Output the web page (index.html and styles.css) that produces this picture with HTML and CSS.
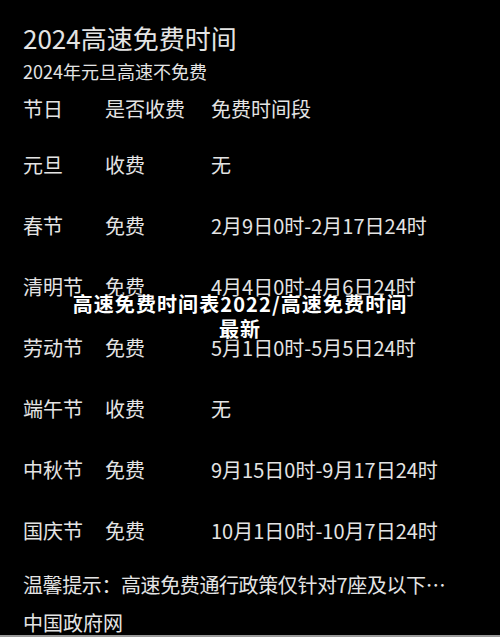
FILE: index.html
```html
<!DOCTYPE html>
<html lang="zh-CN">
<head>
<meta charset="utf-8">
<link rel="stylesheet" href="styles.css">
</head>
<body>
<div class="page">
  <div class="title">2024高速免费时间</div>
  <div class="subtitle">2024年元旦高速不免费</div>
  <div class="table">
    <div class="row head"><span>节日</span><span>是否收费</span><span>免费时间段</span></div>
    <div class="row"><span>元旦</span><span>收费</span><span>无</span></div>
    <div class="row"><span>春节</span><span>免费</span><span>2月9日0时-2月17日24时</span></div>
    <div class="row"><span>清明节</span><span>免费</span><span>4月4日0时-4月6日24时</span></div>
    <div class="row"><span>劳动节</span><span>免费</span><span>5月1日0时-5月5日24时</span></div>
    <div class="row"><span>端午节</span><span>收费</span><span>无</span></div>
    <div class="row"><span>中秋节</span><span>免费</span><span>9月15日0时-9月17日24时</span></div>
    <div class="row"><span>国庆节</span><span>免费</span><span>10月1日0时-10月7日24时</span></div>
  </div>
  <div class="tip">温馨提示：高速免费通行政策仅针对7座及以下…</div>
  <div class="source">中国政府网</div>
  <div class="overlay">高速免费时间表2022/高速免费时间<br>最新</div>
</div>
</body>
</html>
```
FILE: styles.css
```css
html, body {
  margin: 0;
  padding: 0;
  background: #000;
}
body {
  width: 500px;
  height: 637px;
  overflow: hidden;
}
.page {
  position: relative;
  height: 635px;
  border-bottom: 2px solid #9a9a9a;
  box-sizing: content-box;
  overflow: hidden;
  padding-left: 23px;
  font-family: "Noto Sans CJK SC", sans-serif;
  color: #e4e4e4;
}
.title {
  padding-top: 20px;
  font-size: 26px;
  line-height: 36px;
}
.subtitle {
  margin-top: 3px;
  font-size: 18px;
  line-height: 24px;
}
.table {
  font-size: 20px;
}
.row {
  display: grid;
  grid-template-columns: 82px 106px 1fr;
  line-height: 61px;
}
.row.head {
  line-height: 51px;
}
.tip {
  margin-top: 4px;
  font-size: 20px;
  line-height: 39px;
  letter-spacing: -0.4px;
}
.source {
  font-size: 20px;
  line-height: 38px;
}
.overlay {
  position: absolute;
  top: 291px;
  left: 40px;
  width: 400px;
  text-align: center;
  font-size: 20px;
  font-weight: 700;
  line-height: 25px;
  letter-spacing: 1.1px;
  color: #fff;
  text-shadow: 0 0 3px #000, 1px 1px 2px #000;
}
```
